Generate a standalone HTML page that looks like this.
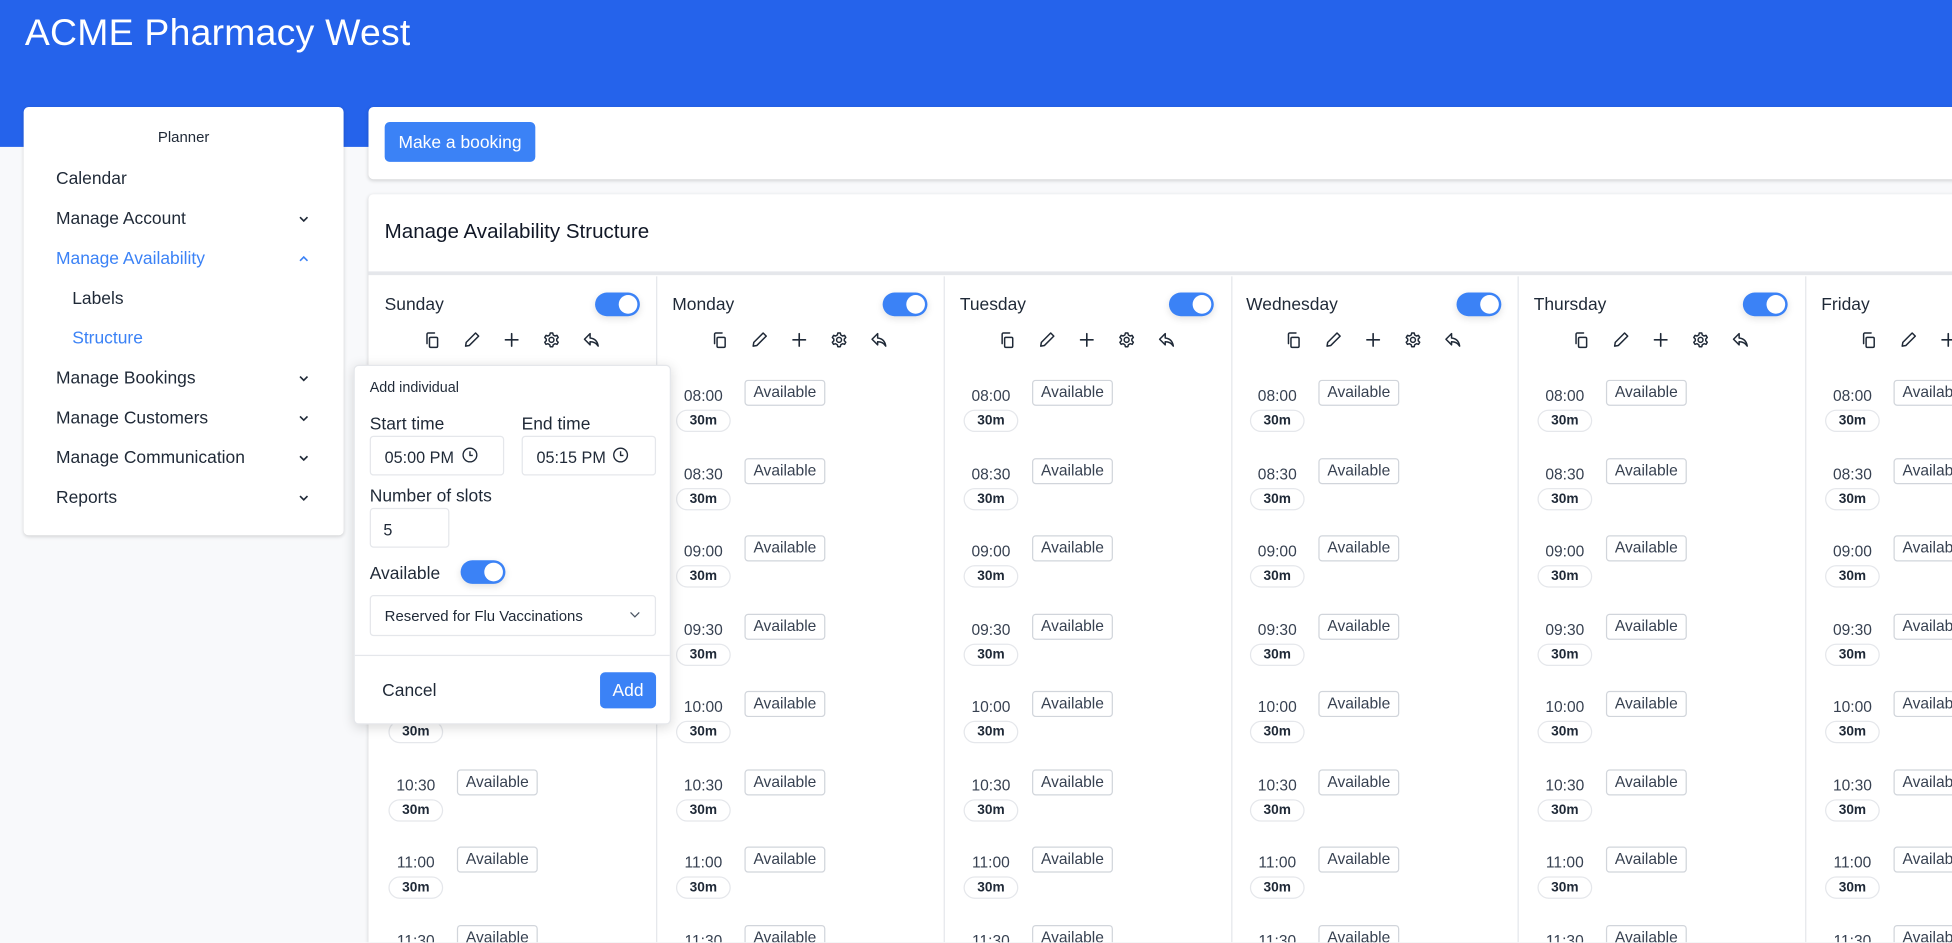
<!DOCTYPE html>
<html><head><meta charset="utf-8"><style>
html,body{margin:0;padding:0;width:1952px;height:943px;overflow:hidden;background:#f8f9fb;}
#w{position:absolute;left:0;top:0;width:1568px;height:757px;transform:scale(1.24490);transform-origin:0 0;font-family:"Liberation Sans",sans-serif;color:#1f2937;overflow:hidden;}
.abs{position:absolute}
.hdr{left:0;top:0;width:1568px;height:118px;background:#2563eb}
.card{background:#fff;border-radius:4px;box-shadow:0 1px 3px rgba(0,0,0,.15)}
.nav{position:absolute;left:26px;font-size:14px;line-height:16px}
.chev{position:absolute;left:220px;width:10px;height:10px}
.col{position:absolute;top:222px;width:231px;height:535px;border-right:1px solid #e5e7eb}
.day{position:absolute;left:13px;top:236px;font-size:14px}
.tg{position:absolute;width:36px;height:19px;border-radius:10px;background:#3b82f6;box-shadow:0 2px 6px rgba(0,0,0,.12)}
.tg::after{content:"";position:absolute;right:2px;top:2px;width:15px;height:15px;border-radius:50%;background:#fff}
.ic{position:absolute;top:0;width:14px;height:14px}
.slots{position:absolute;left:0;top:83px;width:231px;height:452px;overflow:hidden}
.s{position:relative;height:62.5px}
.t{position:absolute;left:16px;width:44px;text-align:center;top:6px;font-size:12.5px;color:#374151}
.p{position:absolute;left:16px;width:42px;height:16px;top:24px;border:1px solid #e5e7eb;border-radius:9px;font-size:11px;font-weight:bold;text-align:center;line-height:16px}
.a{position:absolute;left:71px;top:0;width:63px;height:19px;border:1px solid #d1d5db;border-radius:3px;font-size:12.5px;line-height:19px;text-align:center;color:#374151}
.lbl{position:absolute;font-size:14px}
.inp{position:absolute;border:1px solid #e5e7eb;border-radius:3px;background:#fff;font-size:13px;box-sizing:border-box}
</style></head><body><div id="w">
<div class="abs hdr"></div>
<div class="abs" style="left:20px;top:10px;font-size:30px;color:#fff;letter-spacing:0.2px">ACME Pharmacy West</div>

<div class="abs card" style="left:19px;top:86px;width:257px;height:344px">
<div class="abs" style="left:0;top:17px;width:257px;text-align:center;font-size:12px">Planner</div>
<div class="nav" style="top:49px">Calendar</div>
<div class="nav" style="top:81px">Manage Account</div>
<div class="nav" style="top:113px;color:#3b82f6">Manage Availability</div>
<div class="nav" style="top:145px;left:39px">Labels</div>
<div class="nav" style="top:177px;left:39px;color:#3b82f6">Structure</div>
<div class="nav" style="top:209px">Manage Bookings</div>
<div class="nav" style="top:241px">Manage Customers</div>
<div class="nav" style="top:273px">Manage Communication</div>
<div class="nav" style="top:305px">Reports</div>
<svg class="chev" style="top:85px" viewBox="0 0 10 10"><path d="M2 3.5l3 3 3-3" fill="none" stroke="#1f2937" stroke-width="1.3"/></svg>
<svg class="chev" style="top:117px" viewBox="0 0 10 10"><path d="M2 6.5l3-3 3 3" fill="none" stroke="#3b82f6" stroke-width="1.3"/></svg>
<svg class="chev" style="top:213px" viewBox="0 0 10 10"><path d="M2 3.5l3 3 3-3" fill="none" stroke="#1f2937" stroke-width="1.3"/></svg>
<svg class="chev" style="top:245px" viewBox="0 0 10 10"><path d="M2 3.5l3 3 3-3" fill="none" stroke="#1f2937" stroke-width="1.3"/></svg>
<svg class="chev" style="top:277px" viewBox="0 0 10 10"><path d="M2 3.5l3 3 3-3" fill="none" stroke="#1f2937" stroke-width="1.3"/></svg>
<svg class="chev" style="top:309px" viewBox="0 0 10 10"><path d="M2 3.5l3 3 3-3" fill="none" stroke="#1f2937" stroke-width="1.3"/></svg>
</div>

<div class="abs card" style="left:296px;top:86px;width:1290px;height:58px">
<div class="abs" style="left:13px;top:12px;width:121px;height:32px;background:#3b82f6;border-radius:4px;color:#fff;font-size:14px;line-height:32px;text-align:center">Make a booking</div>
</div>

<div class="abs card" style="left:296px;top:156px;width:1290px;height:601px;border-radius:4px 4px 0 0">
<div class="abs" style="left:13px;top:21px;font-size:16.5px;color:#111827">Manage Availability Structure</div>
<div class="abs" style="left:0;top:62px;width:1290px;height:3px;background:#e5e7eb"></div>
</div>

<svg width="0" height="0" style="position:absolute"><defs>
<g id="i1" fill="none" stroke="#1f2937" stroke-width="1.2" stroke-linecap="round" stroke-linejoin="round"><rect x="5" y="5" width="6.5" height="8" rx="1"/><path d="M3 10V2.5a1 1 0 0 1 1-1h5"/></g>
<g id="i2" fill="none" stroke="#1f2937" stroke-width="1.2" stroke-linejoin="round"><path d="M10 1.5l2.5 2.5-7.5 7.5-3 .5.5-3z"/></g>
<g id="i3" fill="none" stroke="#1f2937" stroke-width="1.3" stroke-linecap="round"><path d="M7 2v10M2 7h10"/></g>
<g id="i4" fill="none" stroke="#1f2937" stroke-width="1.2"><circle cx="7" cy="7" r="2"/><path d="M6 1.5h2l.4 1.6 1.4.8 1.6-.5 1 1.7-1.2 1.2v1.4l1.2 1.2-1 1.7-1.6-.5-1.4.8L8 12.5H6l-.4-1.6-1.4-.8-1.6.5-1-1.7 1.2-1.2V6.3L1.6 5.1l1-1.7 1.6.5 1.4-.8z" stroke-linejoin="round"/></g>
<g id="i5" fill="none" stroke="#1f2937" stroke-width="1.2" stroke-linejoin="round"><path d="M6 2L1.5 6.5 6 11V8.5c3 0 5 1 6.5 3.5-.5-3.5-2.5-6-6.5-6.5z"/></g>
</defs></svg>

<div class="col" style="left:296px"></div>
<div style="position:absolute;left:296px;top:0">
 <div class="day" style="left:13px">Sunday</div><div class="tg" style="left:182px;top:235px"></div>
 <div class="abs" style="left:0;top:266px;width:231px;height:14px"><svg class="ic" style="left:44px" viewBox="0 0 14 14"><use href="#i1"/></svg><svg class="ic" style="left:76px" viewBox="0 0 14 14"><use href="#i2"/></svg><svg class="ic" style="left:108px" viewBox="0 0 14 14"><use href="#i3"/></svg><svg class="ic" style="left:140px" viewBox="0 0 14 14"><use href="#i4"/></svg><svg class="ic" style="left:172px" viewBox="0 0 14 14"><use href="#i5"/></svg></div>
 <div class="slots" style="top:305px"><div class="s"><div class="t">08:00</div><div class="p">30m</div><div class="a">Available</div></div><div class="s"><div class="t">08:30</div><div class="p">30m</div><div class="a">Available</div></div><div class="s"><div class="t">09:00</div><div class="p">30m</div><div class="a">Available</div></div><div class="s"><div class="t">09:30</div><div class="p">30m</div><div class="a">Available</div></div><div class="s"><div class="t">10:00</div><div class="p">30m</div><div class="a">Available</div></div><div class="s"><div class="t">10:30</div><div class="p">30m</div><div class="a">Available</div></div><div class="s"><div class="t">11:00</div><div class="p">30m</div><div class="a">Available</div></div><div class="s"><div class="t">11:30</div><div class="p">30m</div><div class="a">Available</div></div></div>
</div>
<div class="col" style="left:527px"></div>
<div style="position:absolute;left:527px;top:0">
 <div class="day">Monday</div><div class="tg" style="left:182px;top:235px"></div>
 <div class="abs" style="left:0;top:266px;width:231px;height:14px"><svg class="ic" style="left:44px" viewBox="0 0 14 14"><use href="#i1"/></svg><svg class="ic" style="left:76px" viewBox="0 0 14 14"><use href="#i2"/></svg><svg class="ic" style="left:108px" viewBox="0 0 14 14"><use href="#i3"/></svg><svg class="ic" style="left:140px" viewBox="0 0 14 14"><use href="#i4"/></svg><svg class="ic" style="left:172px" viewBox="0 0 14 14"><use href="#i5"/></svg></div>
 <div class="slots" style="top:305px"><div class="s"><div class="t">08:00</div><div class="p">30m</div><div class="a">Available</div></div><div class="s"><div class="t">08:30</div><div class="p">30m</div><div class="a">Available</div></div><div class="s"><div class="t">09:00</div><div class="p">30m</div><div class="a">Available</div></div><div class="s"><div class="t">09:30</div><div class="p">30m</div><div class="a">Available</div></div><div class="s"><div class="t">10:00</div><div class="p">30m</div><div class="a">Available</div></div><div class="s"><div class="t">10:30</div><div class="p">30m</div><div class="a">Available</div></div><div class="s"><div class="t">11:00</div><div class="p">30m</div><div class="a">Available</div></div><div class="s"><div class="t">11:30</div><div class="p">30m</div><div class="a">Available</div></div></div>
</div>
<div class="col" style="left:758px"></div>
<div style="position:absolute;left:758px;top:0">
 <div class="day">Tuesday</div><div class="tg" style="left:181px;top:235px"></div>
 <div class="abs" style="left:0;top:266px;width:231px;height:14px"><svg class="ic" style="left:44px" viewBox="0 0 14 14"><use href="#i1"/></svg><svg class="ic" style="left:76px" viewBox="0 0 14 14"><use href="#i2"/></svg><svg class="ic" style="left:108px" viewBox="0 0 14 14"><use href="#i3"/></svg><svg class="ic" style="left:140px" viewBox="0 0 14 14"><use href="#i4"/></svg><svg class="ic" style="left:172px" viewBox="0 0 14 14"><use href="#i5"/></svg></div>
 <div class="slots" style="top:305px"><div class="s"><div class="t">08:00</div><div class="p">30m</div><div class="a">Available</div></div><div class="s"><div class="t">08:30</div><div class="p">30m</div><div class="a">Available</div></div><div class="s"><div class="t">09:00</div><div class="p">30m</div><div class="a">Available</div></div><div class="s"><div class="t">09:30</div><div class="p">30m</div><div class="a">Available</div></div><div class="s"><div class="t">10:00</div><div class="p">30m</div><div class="a">Available</div></div><div class="s"><div class="t">10:30</div><div class="p">30m</div><div class="a">Available</div></div><div class="s"><div class="t">11:00</div><div class="p">30m</div><div class="a">Available</div></div><div class="s"><div class="t">11:30</div><div class="p">30m</div><div class="a">Available</div></div></div>
</div>
<div class="col" style="left:988px"></div>
<div style="position:absolute;left:988px;top:0">
 <div class="day">Wednesday</div><div class="tg" style="left:182px;top:235px"></div>
 <div class="abs" style="left:0;top:266px;width:231px;height:14px"><svg class="ic" style="left:44px" viewBox="0 0 14 14"><use href="#i1"/></svg><svg class="ic" style="left:76px" viewBox="0 0 14 14"><use href="#i2"/></svg><svg class="ic" style="left:108px" viewBox="0 0 14 14"><use href="#i3"/></svg><svg class="ic" style="left:140px" viewBox="0 0 14 14"><use href="#i4"/></svg><svg class="ic" style="left:172px" viewBox="0 0 14 14"><use href="#i5"/></svg></div>
 <div class="slots" style="top:305px"><div class="s"><div class="t">08:00</div><div class="p">30m</div><div class="a">Available</div></div><div class="s"><div class="t">08:30</div><div class="p">30m</div><div class="a">Available</div></div><div class="s"><div class="t">09:00</div><div class="p">30m</div><div class="a">Available</div></div><div class="s"><div class="t">09:30</div><div class="p">30m</div><div class="a">Available</div></div><div class="s"><div class="t">10:00</div><div class="p">30m</div><div class="a">Available</div></div><div class="s"><div class="t">10:30</div><div class="p">30m</div><div class="a">Available</div></div><div class="s"><div class="t">11:00</div><div class="p">30m</div><div class="a">Available</div></div><div class="s"><div class="t">11:30</div><div class="p">30m</div><div class="a">Available</div></div></div>
</div>
<div class="col" style="left:1219px"></div>
<div style="position:absolute;left:1219px;top:0">
 <div class="day">Thursday</div><div class="tg" style="left:181px;top:235px"></div>
 <div class="abs" style="left:0;top:266px;width:231px;height:14px"><svg class="ic" style="left:44px" viewBox="0 0 14 14"><use href="#i1"/></svg><svg class="ic" style="left:76px" viewBox="0 0 14 14"><use href="#i2"/></svg><svg class="ic" style="left:108px" viewBox="0 0 14 14"><use href="#i3"/></svg><svg class="ic" style="left:140px" viewBox="0 0 14 14"><use href="#i4"/></svg><svg class="ic" style="left:172px" viewBox="0 0 14 14"><use href="#i5"/></svg></div>
 <div class="slots" style="top:305px"><div class="s"><div class="t">08:00</div><div class="p">30m</div><div class="a">Available</div></div><div class="s"><div class="t">08:30</div><div class="p">30m</div><div class="a">Available</div></div><div class="s"><div class="t">09:00</div><div class="p">30m</div><div class="a">Available</div></div><div class="s"><div class="t">09:30</div><div class="p">30m</div><div class="a">Available</div></div><div class="s"><div class="t">10:00</div><div class="p">30m</div><div class="a">Available</div></div><div class="s"><div class="t">10:30</div><div class="p">30m</div><div class="a">Available</div></div><div class="s"><div class="t">11:00</div><div class="p">30m</div><div class="a">Available</div></div><div class="s"><div class="t">11:30</div><div class="p">30m</div><div class="a">Available</div></div></div>
</div>
<div class="col" style="left:1450px;border-right:0;width:118px"></div>
<div style="position:absolute;left:1450px;top:0;width:118px;height:757px;overflow:hidden">
 <div class="day">Friday</div>
 <div class="abs" style="left:0;top:266px;width:231px;height:14px"><svg class="ic" style="left:44px" viewBox="0 0 14 14"><use href="#i1"/></svg><svg class="ic" style="left:76px" viewBox="0 0 14 14"><use href="#i2"/></svg><svg class="ic" style="left:108px" viewBox="0 0 14 14"><use href="#i3"/></svg></div>
 <div class="slots" style="top:305px"><div class="s"><div class="t">08:00</div><div class="p">30m</div><div class="a">Available</div></div><div class="s"><div class="t">08:30</div><div class="p">30m</div><div class="a">Available</div></div><div class="s"><div class="t">09:00</div><div class="p">30m</div><div class="a">Available</div></div><div class="s"><div class="t">09:30</div><div class="p">30m</div><div class="a">Available</div></div><div class="s"><div class="t">10:00</div><div class="p">30m</div><div class="a">Available</div></div><div class="s"><div class="t">10:30</div><div class="p">30m</div><div class="a">Available</div></div><div class="s"><div class="t">11:00</div><div class="p">30m</div><div class="a">Available</div></div><div class="s"><div class="t">11:30</div><div class="p">30m</div><div class="a">Available</div></div></div>
</div>

<div class="abs card" style="left:284px;top:293px;width:255px;height:289px;box-shadow:0 2px 10px rgba(0,0,0,.15);border:1px solid #e5e7eb;box-sizing:border-box">
 <div class="abs" style="left:12px;top:12px;font-size:11.5px">Add individual</div>
 <div class="lbl" style="left:12px;top:38px">Start time</div>
 <div class="lbl" style="left:134px;top:38px">End time</div>
 <div class="inp" style="left:12px;top:56px;width:108px;height:32px;padding:9px 0 0 11px">05:00 PM</div>
 <div class="inp" style="left:134px;top:56px;width:108px;height:32px;padding:9px 0 0 11px">05:15 PM</div>
 <svg class="abs" style="left:86px;top:65px" width="13" height="13" viewBox="0 0 13 13"><circle cx="6.5" cy="6.5" r="5.5" fill="none" stroke="#1f2937" stroke-width="1.1"/><path d="M6.5 3.5v3.3h2.3" fill="none" stroke="#1f2937" stroke-width="1.1"/></svg>
 <svg class="abs" style="left:207px;top:65px" width="13" height="13" viewBox="0 0 13 13"><circle cx="6.5" cy="6.5" r="5.5" fill="none" stroke="#1f2937" stroke-width="1.1"/><path d="M6.5 3.5v3.3h2.3" fill="none" stroke="#1f2937" stroke-width="1.1"/></svg>
 <div class="lbl" style="left:12px;top:96px">Number of slots</div>
 <div class="inp" style="left:12px;top:114px;width:64px;height:32px;padding:9px 0 0 10px">5</div>
 <div class="lbl" style="left:12px;top:158px">Available</div>
 <div class="tg" style="left:85px;top:156px"></div>
 <div class="inp" style="left:12px;top:184px;width:230px;height:33px;padding:9px 0 0 11px;font-size:12px">Reserved for Flu Vaccinations</div>
 <svg class="abs" style="left:220px;top:196px" width="10" height="8" viewBox="0 0 10 8"><path d="M1.5 2l3.5 3.5L8.5 2" fill="none" stroke="#4b5563" stroke-width="1"/></svg>
 <div class="abs" style="left:0;top:232px;width:253px;height:1px;background:#e5e7eb"></div>
 <div class="lbl" style="left:22px;top:252px">Cancel</div>
 <div class="abs" style="left:197px;top:246px;width:45px;height:29px;background:#3b82f6;border-radius:4px;color:#fff;font-size:14px;line-height:29px;text-align:center">Add</div>
</div>
</div></body></html>
